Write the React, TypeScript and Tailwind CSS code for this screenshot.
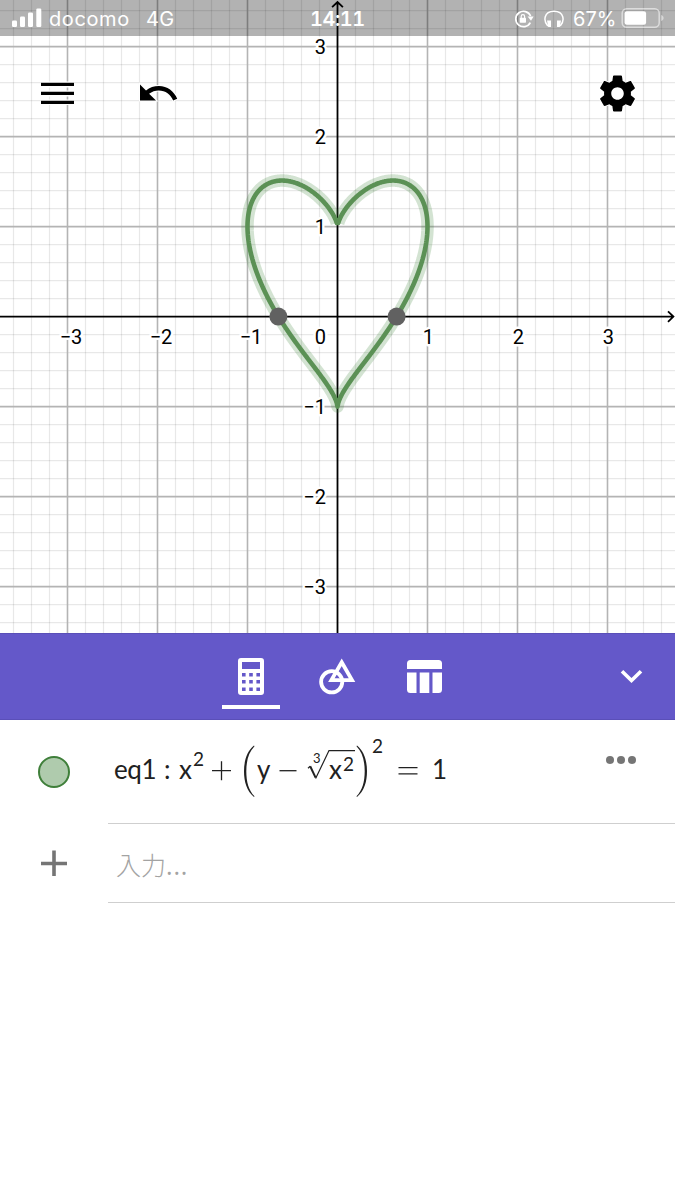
import type { ReactNode } from "react";

const UNIT = 90;
const ORIGIN_X = 337.5;
const ORIGIN_Y = 316.6;
const WIDTH = 675;
const HEIGHT = 633;

const toX = (x: number) => ORIGIN_X + x * UNIT;
const toY = (y: number) => ORIGIN_Y - y * UNIT;

const TICKS = [-3, -2, -1, 1, 2, 3];
const MINOR = Array.from({ length: 41 }, (_, i) => i - 20).filter((i) => i % 5 !== 0);

// x = cos t, y = cbrt(x^2) + sin t
function heartPath() {
  const points: string[] = [];
  const steps = 400;
  const gap = 0.008;
  const push = (t: number) => {
    const x = Math.cos(t);
    const y = Math.cbrt(x * x) + Math.sin(t);
    points.push(`${toX(x).toFixed(2)} ${toY(y).toFixed(2)}`);
  };
  for (let i = 0; i <= steps; i++) {
    push(Math.PI / 2 + gap + ((Math.PI - gap) * i) / steps);
  }
  for (let i = 0; i <= steps; i++) {
    push(-Math.PI / 2 + ((Math.PI - gap) * i) / steps);
  }
  return `M${points.join("L")}`;
}

const label = (n: number) => (n < 0 ? `−${-n}` : `${n}`);

function Graph() {
  const heart = heartPath();
  return (
    <svg width={WIDTH} height={HEIGHT} viewBox={`0 0 ${WIDTH} ${HEIGHT}`} className="block">
      <g stroke="#000" strokeOpacity={0.09} strokeWidth={1.2}>
        {MINOR.map((i) => (
          <g key={i}>
            <line x1={toX(i / 5)} x2={toX(i / 5)} y1={0} y2={HEIGHT} />
            <line x1={0} x2={WIDTH} y1={toY(i / 5)} y2={toY(i / 5)} />
          </g>
        ))}
      </g>
      <g stroke="#b4b4b4" strokeWidth={1.6}>
        {TICKS.map((n) => (
          <g key={n}>
            <line x1={toX(n)} x2={toX(n)} y1={0} y2={HEIGHT} />
            <line x1={0} x2={WIDTH} y1={toY(n)} y2={toY(n)} />
          </g>
        ))}
      </g>
      <g stroke="#000" strokeWidth={1.8} fill="none">
        <path d={`M0 ${ORIGIN_Y}H674M668 ${ORIGIN_Y - 5.2}L673.4 ${ORIGIN_Y}L668 ${ORIGIN_Y + 5.2}`} />
        <path d={`M${ORIGIN_X} ${HEIGHT}V2M${ORIGIN_X - 5.4} 7.2L${ORIGIN_X} 2L${ORIGIN_X + 5.4} 7.2`} />
      </g>
      <g
        fontFamily="Roboto, sans-serif"
        fontSize={20}
        fill="#000"
        stroke="#fff"
        strokeWidth={5}
        strokeLinejoin="round"
        paintOrder="stroke"
      >
        {TICKS.map((n) => (
          <g key={n}>
            <text x={toX(n) + (n < 0 ? 3.5 : 0.8)} y={343.6} textAnchor="middle">
              {label(n)}
            </text>
            <text x={326} y={toY(n) + 7.2} textAnchor="end">
              {label(n)}
            </text>
          </g>
        ))}
        <text x={326} y={343.6} textAnchor="end">
          0
        </text>
      </g>
      <path d={heart} fill="none" stroke="#388030" strokeOpacity={0.22} strokeWidth={12.5} strokeLinejoin="round" />
      <path d={heart} fill="none" stroke="#5b9155" strokeWidth={4.6} strokeLinejoin="round" strokeLinecap="round" />
      <circle cx={278.4} cy={ORIGIN_Y} r={9} fill="#616161" />
      <circle cx={396.6} cy={ORIGIN_Y} r={9} fill="#616161" />
    </svg>
  );
}

function StatusBar() {
  return (
    <div className="absolute inset-x-0 top-0 flex h-9 items-center whitespace-nowrap bg-black/30 pt-0.5 font-['Inter',sans-serif] text-[20px] text-white">
      <svg width="30" height="20" viewBox="0 0 30 20" fill="currentColor" className="mb-0.5 ml-3 shrink-0">
        <rect x="0" y="12.500" width="5" height="6.500" rx="1.2" />
        <rect x="8" y="8.500" width="5" height="10.500" rx="1.2" />
        <rect x="16" y="4.500" width="5" height="14.500" rx="1.2" />
        <rect x="24.3" y="0.500" width="5" height="18.500" rx="1.2" />
      </svg>
      <span className="ml-[7px] w-[97px] shrink-0 tracking-[0.6px]">docomo</span>
      <span className="w-[164px] shrink-0 tracking-[0.3px]">4G</span>
      <span className="w-[204px] shrink-0 font-semibold tabular-nums tracking-[-0.5px]">14:11</span>
      <svg width="20" height="20" viewBox="0 0 20 20" fill="none" stroke="currentColor" strokeWidth="1.7" className="shrink-0">
        <path d="M16.3 13.6A7.7 7.7 0 1 1 16.6 7" />
        <path d="M13.6 7.4h6l-2.6 4.4z" fill="currentColor" stroke="none" />
        <rect x="5.8" y="8.8" width="6.2" height="5" rx="0.7" fill="currentColor" stroke="none" />
        <path d="M7.2 9V7.4a1.7 1.7 0 0 1 3.4 0V9" strokeWidth="1.2" />
      </svg>
      <svg width="20" height="18" viewBox="0 0 20 18" fill="none" stroke="currentColor" strokeWidth="1.5" className="ml-[10px] shrink-0">
        <path d="M3.8 16C-.8 11-.4 1.200 10 1.200S20.800 11 16.200 16" />
        <path d="M3 10.500h4v6.500H4.200zM17 10.500h-4v6.500h2.800z" fill="currentColor" stroke="none" />
      </svg>
      <span className="ml-[9px] w-[48px] shrink-0">67%</span>
      <svg width="44" height="22" viewBox="0 0 44 22" className="mb-0.5 shrink-0">
        <rect x="1.2" y="1.7" width="37" height="18.5" rx="4.5" fill="none" stroke="#fff" strokeOpacity=".55" strokeWidth="1.5" />
        <rect x="3.6" y="4.2" width="21.5" height="13.6" rx="2.2" fill="#fff" />
        <path d="M40.2 8v6c1.6-.6 2.4-1.7 2.4-3s-.8-2.4-2.4-3z" fill="#fff" fillOpacity=".5" />
      </svg>
    </div>
  );
}

function GraphButtons() {
  return (
    <div className="absolute inset-x-0 top-[71px] flex h-11 items-center pl-10 pr-9">
      <button aria-label="Menu">
        <svg width="35" height="24" viewBox="0 0 35 24" className="block">
          <path d="M1 3.4h33M1 12.4h33M1 21.4h33" stroke="#fff" strokeWidth="6" />
          <path d="M1 3.4h33M1 12.4h33M1 21.4h33" stroke="#000" strokeWidth="3.4" />
        </svg>
      </button>
      <button aria-label="Undo" className="ml-[64px]">
        <svg width="40" height="24" viewBox="0 0 40 24" className="block" stroke="#fff" strokeWidth="2" paintOrder="stroke">
          <path d="M1 3.4L7 9.400C10.700 6.400 15 5 20 5C28.200 5 35.200 10.400 38.200 17.800L34.200 19.600C31.800 13.200 26.400 9.400 19.800 9.400C16.200 9.400 12.800 10.600 10.100 12.800L17 19.600H1z" />
        </svg>
      </button>
      <button aria-label="Settings" className="ml-auto">
        <svg width="43" height="43" viewBox="0 0 24 24" className="block" stroke="#fff" strokeWidth="1" paintOrder="stroke">
          <path d="M19.43 12.98c.04-.32.07-.64.07-.98s-.03-.66-.07-.98l2.11-1.65c.19-.15.24-.42.12-.64l-2-3.46c-.12-.22-.39-.3-.61-.22l-2.49 1c-.52-.4-1.08-.73-1.69-.98l-.38-2.65C14.46 2.18 14.25 2 14 2h-4c-.25 0-.46.18-.49.42l-.38 2.65c-.61.25-1.17.59-1.69.98l-2.49-1c-.23-.09-.49 0-.61.22l-2 3.46c-.13.22-.07.49.12.64l2.11 1.65c-.04.32-.07.65-.07.98s.03.66.07.98l-2.11 1.65c-.19.15-.24.42-.12.64l2 3.46c.12.22.39.3.61.22l2.49-1c.52.4 1.08.73 1.69.98l.38 2.65c.03.24.24.42.49.42h4c.25 0 .46-.18.49-.42l.38-2.65c.61-.25 1.17-.59 1.69-.98l2.49 1c.23.09.49 0 .61-.22l2-3.46c.12-.22.07-.49-.12-.64l-2.11-1.65zM12 15.5c-1.93 0-3.5-1.57-3.5-3.5s1.57-3.5 3.5-3.5 3.5 1.57 3.5 3.5-1.57 3.5-3.5 3.5z" />
        </svg>
      </button>
    </div>
  );
}

function Toolbar() {
  return (
    <nav className="flex h-[87px] border-y border-[#5a4fb8] bg-[#6458c9] pl-[222px] text-white">
      <button aria-label="Algebra" className="flex h-[75px] w-[58px] justify-center border-b-4 border-white pt-[24px]">
        <svg width="26" height="37" viewBox="0 0 26 37">
          <path
            fill="currentColor"
            fillRule="evenodd"
            d="M3 0h20a3 3 0 0 1 3 3v31a3 3 0 0 1-3 3H3a3 3 0 0 1-3-3V3a3 3 0 0 1 3-3zM4 4v7h18V4zM4 15v3.6h3.6V15zM11.2 15v3.6h3.6V15zM18.4 15v3.6H22V15zM4 22v3.6h3.6V22zM11.2 22v3.6h3.6V22zM18.4 22v3.6H22V22zM4 29.4V33h3.6v-3.6zM11.2 29.4V33h3.6v-3.6zM18.4 29.4V33H22v-3.6z"
          />
        </svg>
      </button>
      <button aria-label="Tools" className="ml-[39px] flex pt-[23px]">
        <svg width="37" height="38" viewBox="0 0 37 38" fill="none" stroke="currentColor" strokeWidth="3.8">
          <circle cx="12.7" cy="24.8" r="10.6" />
          <path d="M22.7 5.2L33 23.1H12.4z" />
        </svg>
      </button>
      <button aria-label="Table" className="ml-[51px] flex pt-[26px]">
        <svg width="35" height="33" viewBox="0 0 35 33" fill="currentColor">
          <path d="M3.5 0h28A3.5 3.5 0 0 1 35 3.5V9H0V3.5A3.5 3.5 0 0 1 3.5 0zM0 12.5h9.5V33h-6A3.5 3.5 0 0 1 0 29.5zM12.7 12.5h9.6V33h-9.6zM25.5 12.5H35v17a3.5 3.5 0 0 1-3.5 3.5h-6z" />
        </svg>
      </button>
      <button aria-label="Collapse" className="ml-auto mr-[32px] flex pt-[35px]">
        <svg width="23" height="15" viewBox="0 0 23 15" fill="none" stroke="currentColor" strokeWidth="3.6">
          <path d="M2 2.3L11.5 11.6L21 2.3" />
        </svg>
      </button>
    </nav>
  );
}

function Sym({ className, children }: { className: string; children: ReactNode }) {
  return <span className={`mt-[36px] h-[26px] shrink-0 text-[26px] leading-[26px] ${className}`}>{children}</span>;
}

function Sup({ className, children }: { className: string; children: ReactNode }) {
  return <span className={`shrink-0 text-[19px] leading-[18px] ${className}`}>{children}</span>;
}

function Equation() {
  return (
    <div className="flex h-[103px] w-[352px] items-start whitespace-nowrap font-['Lato',sans-serif] text-[#212121]">
      <Sym className="w-[50px] tracking-[-0.4px]">eq1</Sym>
      <Sym className="w-[15px]">:</Sym>
      <Sym className="w-[14px]">x</Sym>
      <Sup className="mt-[30px] w-[18px]">2</Sup>
      <svg width="32" height="103" fill="none" stroke="currentColor" strokeWidth="1.3" className="shrink-0">
        <path d="M1 50.7h19M10.5 41.2v19" />
      </svg>
      <Paren />
      <Sym className="ml-[2px] w-[22px]">y</Sym>
      <svg width="28" height="103" fill="none" stroke="currentColor" strokeWidth="1.3" className="shrink-0">
        <path d="M.5 50.7h17" />
      </svg>
      {/* cube root of x squared */}
      <div className="relative flex h-[103px] w-[49px] shrink-0 items-start">
        <svg width="49" height="103" fill="none" stroke="currentColor" strokeWidth="1.2" className="absolute left-0 top-0">
          <path d="M1 48.2L3.2 46.2" />
          <path d="M3.2 46.2L8.6 57.6" strokeWidth="2" />
          <path d="M8.6 58.6L22 30.6H48" />
        </svg>
        <span className="absolute left-[6px] top-[32px] text-[13px] leading-[13px]">3</span>
        <Sym className="ml-[22px] w-[14px]">x</Sym>
        <Sup className="mt-[35px]">2</Sup>
      </div>
      <Paren flip />
      <Sup className="ml-[4px] mt-[17px] w-[26px]">2</Sup>
      <svg width="34" height="103" fill="none" stroke="currentColor" strokeWidth="1.3" className="shrink-0">
        <path d="M.5 47.7h19M.5 53.8h19" />
      </svg>
      <Sym className="">1</Sym>
    </div>
  );
}

function Paren({ flip = false }: { flip?: boolean }) {
  return (
    <svg width="12" height="103" viewBox="0 0 12 103" className={`shrink-0 ${flip ? "-scale-x-100" : ""}`} fill="currentColor">
      <path d="M11 25.6C3.8 31.4 1 41 1 51.3S3.8 71.2 11 77l.5-.7C5.6 70.4 3.3 61.6 3.3 51.3S5.6 32.2 11.500 26.300z" />
    </svg>
  );
}

export default function App() {
  return (
    <main className="flex h-[1200px] w-[675px] flex-col overflow-hidden bg-white">
      <section className="relative h-[633px] shrink-0">
        <Graph />
        <StatusBar />
        <GraphButtons />
      </section>
      <Toolbar />
      <section>
        <div className="flex h-[104px]">
          <div className="w-[108px] shrink-0 pl-[38px] pt-[36px]">
            <div className="size-[32px] rounded-full border-2 border-[#3f7f3a] bg-[#afcbad]" />
          </div>
          <div className="flex flex-1 border-b border-[#cfcfcf] pl-[6px]">
            <Equation />
            <button aria-label="More" className="ml-auto mr-[39px] mt-[36px] flex h-2 gap-[3px]">
              <span className="size-2 rounded-full bg-[#757575]" />
              <span className="size-2 rounded-full bg-[#757575]" />
              <span className="size-2 rounded-full bg-[#757575]" />
            </button>
          </div>
        </div>
        <div className="flex h-[79px]">
          <div className="w-[108px] shrink-0 pl-[41px] pt-[26px]">
            <svg width="26" height="26" fill="none" stroke="#757575" strokeWidth="3.6">
              <path d="M0 13.5H26M13 .5V26" />
            </svg>
          </div>
          <div className="flex-1 border-b border-[#cfcfcf] pl-[8px] pt-[23px] font-['Noto_Sans_CJK_JP',sans-serif] text-[25px] font-light leading-[34px] text-[#a3a3a3]">
            入力<span className="font-['Open_Sans',sans-serif] font-normal tracking-[0.8px]">...</span>
          </div>
        </div>
      </section>
    </main>
  );
}
